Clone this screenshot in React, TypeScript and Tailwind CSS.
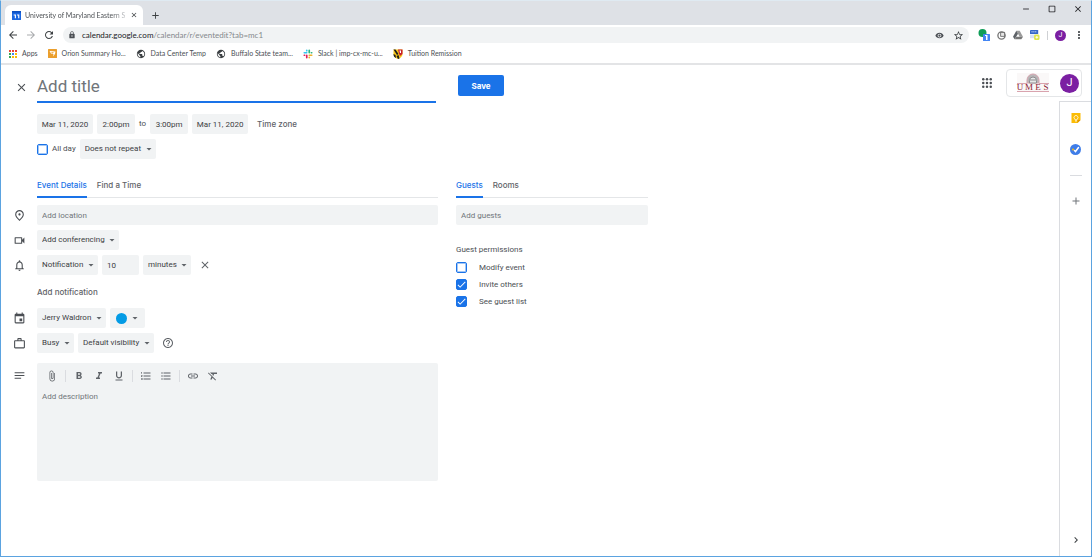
import { ReactNode, useState } from "react";
import type { IconType } from "react-icons";
import {
  MdAdd, MdArrowBack, MdArrowDropDown, MdArrowForward, MdAttachFile, MdCheck, MdChevronRight, MdClose,
  MdCropSquare, MdEvent, MdFormatBold, MdFormatClear, MdFormatItalic, MdFormatListBulleted, MdFormatListNumbered,
  MdFormatUnderlined, MdHelpOutline, MdLink, MdLock, MdMoreVert, MdNotes, MdNotificationsNone, MdOutlinePlace,
  MdOutlineVideocam, MdPublic, MdRefresh, MdRemove, MdRemoveRedEye, MdStarBorder, MdWorkOutline
} from "react-icons/md";

const fieldStyle = "h-5 rounded-xs bg-[#f1f3f4] text-[8px] text-[#3c4043] outline-none"
const googleSans = "font-['Inter',sans-serif]"

function CalendarLogo() {
  return (
    <svg viewBox="0 0 16 16" className="size-[9px] shrink-0">
      <rect width="16" height="16" rx="1" fill="#1a66e0" />
      <rect width="16" height="3" fill="#0b4fc0" />
      <path d="M3 6h4v7H5V8H3zM9 6h4v7h-2V8H9z" fill="#fff" />
    </svg>
  );
}

function AppsLogo() {
  const colors = ["#ea4335", "#ea4335", "#ea4335", "#34a853", "#4285f4", "#fbbc04", "#34a853", "#fbbc04", "#fbbc04"];
  return (
    <svg viewBox="0 0 16 16" className="size-2 shrink-0">
      {colors.map((color, i) => (
        <rect key={i} x={(i % 3) * 6} y={Math.floor(i / 3) * 6} width="4" height="4" fill={color} />
      ))}
    </svg>
  );
}

function OrionLogo() {
  return (
    <svg viewBox="0 0 18 18" className="size-[9px] shrink-0">
      <rect width="18" height="18" rx="1" fill="#eb9f2d" />
      <path d="M3 4l12 1-1 5-4 5 1-5-5-1z" fill="#fff" />
      <path d="M6 6l6 1-3 2z" fill="#eb9f2d" />
    </svg>
  );
}

function SlackLogo() {
  return (
    <svg viewBox="0 0 24 24" className="size-[10px] shrink-0" fill="none" strokeWidth="4" strokeLinecap="round">
      <path d="M9 3v1M3 9h6" stroke="#36c5f0" />
      <path d="M15 3v6M21 9h-1" stroke="#2eb67d" />
      <path d="M15 21v-1M15 15h6" stroke="#ecb22e" />
      <path d="M9 21v-6M3 15h1" stroke="#e01e5a" />
    </svg>
  );
}

function MarylandLogo() {
  return (
    <svg viewBox="0 0 20 20" className="size-[10px] shrink-0">
      <path d="M1 1h18v9c0 5-4 8-9 10C5 18 1 15 1 10z" fill="#f5c518" />
      <path d="M1 1h4l6 9-3 2zM7 14l4-2 2 7-3 1z" fill="#1c1c1c" />
      <path d="M10 1h9v9l-5 4-2-5z" fill="#c8202f" />
      <path d="M13 3h3v5h-2z" fill="#fff" />
      <path d="M1 10l4 2 1 6c-4-2-5-4-5-8z" fill="#1c1c1c" />
    </svg>
  );
}

function DriveLogo() {
  return (
    <svg viewBox="0 0 24 24" className="size-[10px]">
      <path d="M8 2h8l8 14h-8z" fill="#9a9a9a" />
      <path d="M8 2l4 7-8 13-4-6z" fill="#5f6368" />
      <path d="M8 16h16l-4 6H4z" fill="#777" />
    </svg>
  );
}

function UmesLogo() {
  const letters = [{x: 4, char: "U"}, {x: 13, char: "M"}, {x: 22, char: "E"}, {x: 30, char: "S"}];
  return (
    <svg viewBox="0 0 34 20" className="h-5 w-[34px] shrink-0">
      <rect x="1" width="32" height="19" fill="#faf8f8" />
      <path d="M11 10V7a6 6 0 0 1 12 0v3z" fill="#b9b5b7" stroke="#d5a5b0" />
      <path d="M13.500 10V7.500a3.500 3.500 0 0 1 7 0V10z" fill="#e6e8e8" stroke="#8d8d8f" />
      <path d="M14 7h6" stroke="#8d8d8f" />
      <path d="M1 10.500h10M23 10.500h10M1 18.500h32" stroke="#d9a3ae" />
      {letters.map(({ x, char }) => (
        <text key={char} x={x} y="17" textAnchor="middle" fontFamily="Liberation Serif, serif" fontSize="9" fill="#8c1d35">{char}</text>
      ))}
    </svg>
  );
}

function LauncherIcon() {
  const steps = [2, 8, 14];
  return (
    <svg viewBox="0 0 16 16" className="size-[10px]" fill="#4b4f54">
      {steps.map((y) => steps.map((x) => <circle key={x + "-" + y} cx={x} cy={y} r="2" />))}
    </svg>
  );
}

type Bookmark = {
  label: string,
  icon: ReactNode
}

const globe = <MdPublic className="size-[10px] shrink-0 text-[#3c4043]" />

const bookmarks: Bookmark[] = [
  {label: "Apps", icon: <AppsLogo />},
  {label: "Orion Summary Ho...", icon: <OrionLogo />},
  {label: "Data Center Temp", icon: globe},
  {label: "Buffalo State team...", icon: globe},
  {label: "Slack | imp-cx-mc-u...", icon: <SlackLogo />},
  {label: "Tuition Remission", icon: <MarylandLogo />}
]

function Browser() {
  return (
    <header className="shrink-0 border-b-2 border-[#e3e4e6] font-['Lato',sans-serif] text-[#4b4f54]">
      {/* Tab strip */}
      <div className="flex h-6 bg-[#dee1e6]">
        <div className="mt-1 ml-1 flex w-[138px] items-center gap-1 rounded-t-md bg-white pr-[5px] pl-[7px]">
          <CalendarLogo />
          <span className="flex-1 bg-linear-to-r from-[#45494d] from-85% to-[#d0d2d5] bg-clip-text text-[7px] whitespace-nowrap text-transparent">University of Maryland Eastern S</span>
          <button type="button" aria-label="Close tab"><MdClose className="size-2 text-[#3c4043]" /></button>
        </div>
        <button type="button" aria-label="New tab" className="mt-1 ml-[7px]"><MdAdd className="size-[11px] text-[#3c4043]" /></button>
        <div className="mr-2 mb-2 ml-auto flex items-center gap-4 text-[#202124]">
          <button type="button" aria-label="Minimize"><MdRemove className="size-[10px]" /></button>
          <button type="button" aria-label="Maximize"><MdCropSquare className="size-[10px]" /></button>
          <button type="button" aria-label="Close"><MdClose className="size-[10px]" /></button>
        </div>
      </div>

      {/* Address bar */}
      <div className="flex h-5 items-center bg-white pr-[6px] pl-[6px]">
        <div className="flex gap-[6px]">
          <button type="button" aria-label="Back"><MdArrowBack className="size-3 text-[#3c4043]" /></button>
          <button type="button" aria-label="Forward"><MdArrowForward className="size-3 text-[#a9abae]" /></button>
          <button type="button" aria-label="Reload"><MdRefresh className="size-3 text-[#3c4043]" /></button>
        </div>
        <div className="ml-2 flex h-4 flex-1 items-center rounded-full bg-[#f1f3f4] px-[5px]">
          <MdLock className="mr-[6px] size-2 shrink-0" />
          <span className="flex-1 text-[8px] text-[#85898d]"><span className="text-[#202124]">calendar.google.com</span>/calendar/r/eventedit?tab=mc1</span>
          <MdRemoveRedEye className="mr-[9px] size-[9px]" />
          <button type="button" aria-label="Bookmark this tab"><MdStarBorder className="size-[11px] text-[#3c4043]" /></button>
        </div>
        <div className="ml-[9px] flex items-center gap-[7px]">
          <svg viewBox="0 0 24 24" className="size-3">
            <circle cx="9" cy="8" r="8" fill="#0f9d58" />
            <rect x="10" y="10" width="14" height="14" rx="1" fill="#4285f4" />
            <path d="M14 12h5v10h-3v-8h-2z" fill="#fff" />
          </svg>
          <svg viewBox="0 0 20 20" className="size-[9px]">
            <circle cx="10" cy="10" r="8" fill="#fff" stroke="#777" strokeWidth="3" />
            <path d="M8 3h9v9H8z" fill="#e5e5e5" stroke="#444" strokeWidth="1.500" />
          </svg>
          <DriveLogo />
          <svg viewBox="0 0 22 22" className="size-[10px]">
            <rect width="18" height="9" rx="1" fill="#3567c8" />
            <path d="M3 4h12" stroke="#c9d8f7" strokeWidth="2" strokeDasharray="3 1" />
            <rect y="10" width="12" height="8" fill="#d8e3f5" />
            <rect x="9" y="10" width="12" height="12" rx="3" fill="#dfe64a" />
            <path d="M15 13v6M12 16h6" stroke="#fff" strokeWidth="2" />
          </svg>
          <span className="h-[9px] w-px bg-[#cfd1d4]" />
          <span className="flex size-[11px] items-center justify-center rounded-full bg-[#7b1fa2] font-['Roboto',sans-serif] text-[7px] text-white">J</span>
          <button type="button" aria-label="Menu"><MdMoreVert className="size-3 text-[#3c4043]" /></button>
        </div>
      </div>

      {/* Bookmarks */}
      <nav className="flex h-[18px] items-center gap-[10px] bg-white pb-px pl-2 text-[7px]">
        {bookmarks.map((bookmark) => (
          <a key={bookmark.label} href="#" className="flex items-center gap-[5px] whitespace-nowrap">
            {bookmark.icon}
            {bookmark.label}
          </a>
        ))}
      </nav>
    </header>
  );
}

function Select({ label, value }: { label: string, value: string }) {
  return (
    <span className="relative inline-flex">
      <select aria-label={label} className={fieldStyle + " appearance-none pr-[14px] pl-[5px]"}>
        <option>{value}</option>
      </select>
      <MdArrowDropDown className="pointer-events-none absolute top-1 right-px size-3 text-[#5f6368]" />
    </span>
  );
}

function Checkbox({ id, label, checked, className }: { id: string, label: string, checked?: boolean, className: string }) {
  return (
    <label htmlFor={id} className={"flex items-center text-[8px] " + className}>
      <span className="relative flex">
        <input type="checkbox" id={id} defaultChecked={checked} className="peer size-[11px] appearance-none rounded-xs border border-[#1a73e8] ring-1 ring-[#1a73e8]/40 ring-inset checked:bg-[#1a73e8]" />
        <MdCheck className="pointer-events-none absolute inset-0 hidden size-[11px] stroke-current text-white peer-checked:block" />
      </span>
      {label}
    </label>
  );
}

function Row({ icon: Icon, children }: { icon?: IconType, children: ReactNode }) {
  return (
    <div className="flex">
      <div className="flex h-5 w-9 shrink-0 items-center pl-3">
        {Icon && <Icon className="size-[13px] text-[#4b4f54]" />}
      </div>
      <div className="flex min-w-0 flex-1 items-center gap-1">{children}</div>
    </div>
  );
}

function Tabs({ tabs }: { tabs: string[] }) {
  const [active, setActive] = useState(tabs[0]);

  return (
    <div role="tablist" className={"flex h-6 gap-[10px] border-b border-[#e4e6e8] text-[8px] font-medium " + googleSans}>
      {tabs.map((tab) => (
        <button
          key={tab}
          type="button"
          role="tab"
          aria-selected={tab === active}
          onClick={() => setActive(tab)}
          className={tab === active ? "h-6 border-b-2 border-[#1a73e8] text-[#1a73e8]" : "h-6 border-b-2 border-transparent text-[#5f6368]"}
        >
          {tab}
        </button>
      ))}
    </div>
  );
}

const tools: { label: string, icon: IconType, divider?: boolean }[] = [
  {label: "Attach file", icon: MdAttachFile, divider: true},
  {label: "Bold", icon: MdFormatBold},
  {label: "Italic", icon: MdFormatItalic},
  {label: "Underline", icon: MdFormatUnderlined, divider: true},
  {label: "Numbered list", icon: MdFormatListNumbered},
  {label: "Bulleted list", icon: MdFormatListBulleted, divider: true},
  {label: "Insert link", icon: MdLink},
  {label: "Remove formatting", icon: MdFormatClear}
]

function EventDetails() {
  return (
    <div className="w-full max-w-[437px]">
      <div className="pl-9"><Tabs tabs={["Event Details", "Find a Time"]} /></div>
      <div className="mt-[7px] space-y-[5px]">
        <Row icon={MdOutlinePlace}>
          <input aria-label="Location" placeholder="Add location" className={fieldStyle + " w-full px-[5px] placeholder:text-[#70757a]"} />
        </Row>
        <Row icon={MdOutlineVideocam}>
          <Select label="Conferencing" value="Add conferencing" />
        </Row>
        <Row icon={MdNotificationsNone}>
          <Select label="Notification type" value="Notification" />
          <input aria-label="Amount" defaultValue="10" className={fieldStyle + " w-[37px] px-[5px]"} />
          <Select label="Unit" value="minutes" />
          <button type="button" aria-label="Remove notification" className="ml-1"><MdClose className="size-3 text-[#5f6368]" /></button>
        </Row>
      </div>
      <div className="flex h-[33px] items-center pl-9">
        <button type="button" className={"text-[8px] font-medium text-[#5f6368] " + googleSans}>Add notification</button>
      </div>
      <div className="space-y-[5px]">
        <Row icon={MdEvent}>
          <Select label="Calendar" value="Jerry Waldron" />
          <button type="button" aria-label="Event color" className={fieldStyle + " flex items-center gap-[2px] pr-1 pl-[6px]"}>
            <span className="size-[11px] rounded-full bg-[#039be5]" />
            <MdArrowDropDown className="size-3 text-[#5f6368]" />
          </button>
        </Row>
        <Row icon={MdWorkOutline}>
          <Select label="Availability" value="Busy" />
          <Select label="Visibility" value="Default visibility" />
          <button type="button" aria-label="Help" className="ml-1"><MdHelpOutline className="size-3 text-[#5f6368]" /></button>
        </Row>
      </div>
      <div className="mt-[10px] flex">
        <div className="w-9 shrink-0 pt-[6px] pl-3"><MdNotes className="size-[13px] text-[#4b4f54]" /></div>
        <div className="min-w-0 flex-1 rounded-xs bg-[#f1f3f4]">
          <div className="flex h-[26px] items-center pl-[9px]">
            {tools.map(({ label, icon: Icon, divider }) => (
              <div key={label} className={divider ? "mr-[7px] flex border-r border-[#dadce0] pr-[7px]" : "flex pr-2"}>
                <button type="button" aria-label={label}><Icon className="size-3 text-[#5f6368]" /></button>
              </div>
            ))}
          </div>
          <textarea aria-label="Description" placeholder="Add description" className="block h-[92px] w-full resize-none px-[5px] pt-[2px] text-[8px] outline-none placeholder:text-[#70757a]" />
        </div>
      </div>
    </div>
  );
}

function Guests() {
  return (
    <div className="w-full max-w-[192px]">
      <Tabs tabs={["Guests", "Rooms"]} />
      <input aria-label="Guests" placeholder="Add guests" className={fieldStyle + " mt-[7px] block w-full px-[5px] placeholder:text-[#70757a]"} />
      <fieldset className="mt-[19px]">
        <legend className="mb-[7px] text-[8px] leading-[11px]">Guest permissions</legend>
        <div className="space-y-[6px]">
          <Checkbox id="modify" label="Modify event" className="h-[11px] gap-3" />
          <Checkbox id="invite" label="Invite others" checked className="h-[11px] gap-3" />
          <Checkbox id="guestList" label="See guest list" checked className="h-[11px] gap-3" />
        </div>
      </fieldset>
    </div>
  );
}

function SidePanel() {
  return (
    <aside className="mt-1 flex w-8 flex-1 flex-col items-center self-end border-t border-l border-[#dadce0] pb-[10px]">
      <button type="button" aria-label="Keep" className="mt-[11px]">
        <svg viewBox="0 0 20 20" className="size-[10px]">
          <path d="M1 0h18v14l-6 6H1z" fill="#fbbc04" />
          <path d="M19 14h-6v6z" fill="#e09500" />
          <path d="M8 12.500a4 4 0 1 1 4 0V14H8zM8 16h4" fill="none" stroke="#fff" strokeWidth="1.500" />
        </svg>
      </button>
      <button type="button" aria-label="Tasks" className="mt-[21px]">
        <svg viewBox="0 0 22 22" className="size-[11px]">
          <circle cx="11" cy="11" r="11" fill="#3f7de8" />
          <path d="M9 13l2 2 6-8" fill="none" stroke="#fff" strokeWidth="3" strokeLinecap="round" />
          <circle cx="6" cy="11" r="2" fill="#fbbc04" />
        </svg>
      </button>
      <span className="mt-5 h-px w-3 bg-[#dadce0]" />
      <button type="button" aria-label="Get add-ons" className="mt-[19px]"><MdAdd className="size-3 text-[#70757a]" /></button>
      <button type="button" aria-label="Hide side panel" className="mt-auto"><MdChevronRight className="size-3 text-[#3c4043]" /></button>
    </aside>
  );
}

function EventEdit() {
  return (
    <form className="min-w-0 flex-1" onSubmit={(event) => event.preventDefault()}>
      <div className="flex items-start pt-2">
        <button type="button" aria-label="Cancel" className="mt-2 ml-[14px] shrink-0"><MdClose className="size-[13px] text-[#4b4f54]" /></button>
        <input aria-label="Title" placeholder="Add title" className="ml-[9px] h-[30px] w-full max-w-[399px] border-b-2 border-[#1a73e8] pb-[3px] text-[17px] outline-none placeholder:text-[#70757a]" />
        <button type="submit" className={"mt-[2px] ml-[22px] h-[21px] w-[46px] shrink-0 rounded-xs bg-[#1a73e8] text-[8px] font-bold text-white " + googleSans}>Save</button>
      </div>
      <div className="mt-[11px] flex items-center gap-1 pl-9 text-[8px]">
        <input aria-label="Start date" defaultValue="Mar 11, 2020" className={fieldStyle + " w-14 text-center"} />
        <input aria-label="Start time" defaultValue="2:00pm" className={fieldStyle + " w-[38px] text-center"} />
        <span>to</span>
        <input aria-label="End time" defaultValue="3:00pm" className={fieldStyle + " w-[38px] text-center"} />
        <input aria-label="End date" defaultValue="Mar 11, 2020" className={fieldStyle + " w-14 text-center"} />
        <button type="button" className={"ml-[5px] font-medium text-[#5f6368] " + googleSans}>Time zone</button>
      </div>
      <div className="mt-[5px] mb-[15px] flex items-center gap-1 pl-9">
        <Checkbox id="allDay" label="All day" className="gap-1" />
        <Select label="Repeat" value="Does not repeat" />
      </div>
      <div className="flex gap-[18px]">
        <EventDetails />
        <Guests />
      </div>
    </form>
  );
}

function App() {
  return (
    <div className="flex min-h-screen flex-col border border-[#5ba3e0] border-t-[#dfeaf2] bg-white font-['Roboto',sans-serif] text-[#4b4f54]">
      <Browser />
      <main className="flex flex-1">
        <EventEdit />
        <div className="flex shrink-0 flex-col">
          <div className="mt-1 mr-[9px] flex items-center">
            <button type="button" aria-label="Google apps" className="mr-[14px]"><LauncherIcon /></button>
            <div className="flex h-7 items-center gap-[10px] rounded border border-[#e4e6e8] pr-[2px] pl-[9px]">
              <UmesLogo />
              <button type="button" aria-label="Account" className="flex size-[19px] items-center justify-center rounded-full bg-[#7b1fa2] text-[11px] text-white">J</button>
            </div>
          </div>
          <SidePanel />
        </div>
      </main>
    </div>
  )
}

export default App
